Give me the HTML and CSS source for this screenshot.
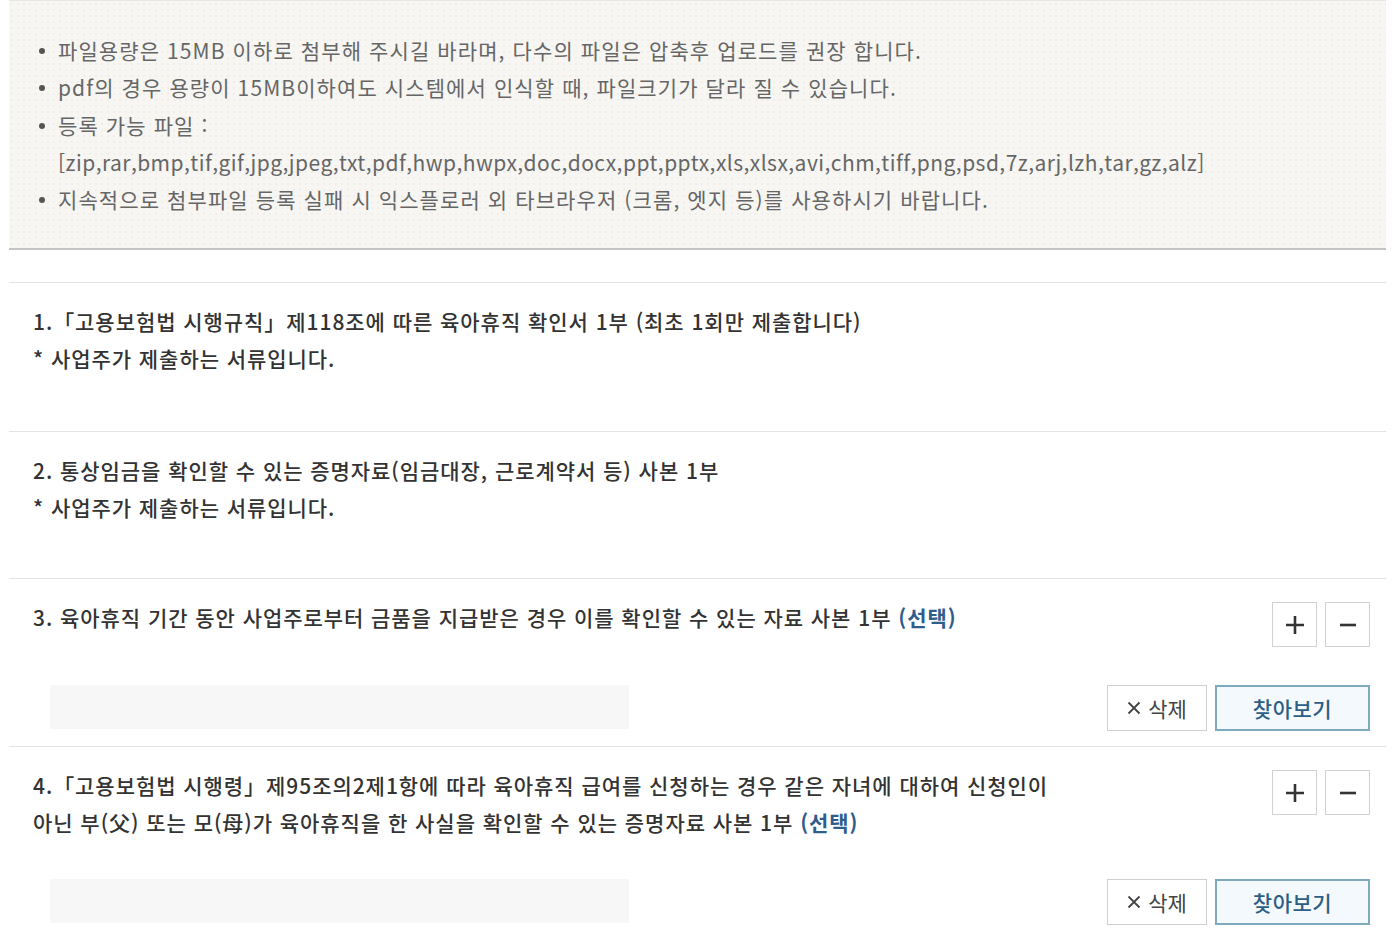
FILE: index.html
```html
<!DOCTYPE html>
<html lang="ko">
<head>
<meta charset="utf-8">
<title>첨부파일</title>
<link rel="stylesheet" href="styles.css">
</head>
<body>
<div class="page">
  <div class="notice">
    <ul class="notice-list">
      <li>파일용량은 15MB 이하로 첨부해 주시길 바라며, 다수의 파일은 압축후 업로드를 권장 합니다.</li>
      <li>pdf의 경우 용량이 15MB이하여도 시스템에서 인식할 때, 파일크기가 달라 질 수 있습니다.</li>
      <li>등록 가능 파일 :<br><span class="ext">[zip,rar,bmp,tif,gif,jpg,jpeg,txt,pdf,hwp,hwpx,doc,docx,ppt,pptx,xls,xlsx,avi,chm,tiff,png,psd,7z,arj,lzh,tar,gz,alz]</span></li>
      <li>지속적으로 첨부파일 등록 실패 시 익스플로러 외 타브라우저 (크롬, 엣지 등)를 사용하시기 바랍니다.</li>
    </ul>
  </div>

  <div class="docs">
    <div class="doc doc-plain doc-first">
      <p class="doc-title">1.「고용보험법 시행규칙」제118조에 따른 육아휴직 확인서 1부 (최초 1회만 제출합니다)<br>* 사업주가 제출하는 서류입니다.</p>
    </div>
    <div class="doc doc-plain">
      <p class="doc-title">2. 통상임금을 확인할 수 있는 증명자료(임금대장, 근로계약서 등) 사본 1부<br>* 사업주가 제출하는 서류입니다.</p>
    </div>
    <div class="doc">
      <div class="doc-head">
        <p class="doc-title">3. 육아휴직 기간 동안 사업주로부터 금품을 지급받은 경우 이를 확인할 수 있는 자료 사본 1부 <span class="opt">(선택)</span></p>
        <div class="pm">
          <button class="pm-btn" type="button" aria-label="추가"><svg width="20" height="20" viewBox="0 0 20 20"><path d="M10 1v18M1 10h18" stroke="#333" stroke-width="2.6" fill="none"/></svg></button>
          <button class="pm-btn" type="button" aria-label="삭제"><svg width="20" height="20" viewBox="0 0 20 20"><path d="M2 10h16" stroke="#333" stroke-width="2.6" fill="none"/></svg></button>
        </div>
      </div>
      <div class="file-row">
        <div class="file-input"></div>
        <div class="file-btns">
          <button class="btn-del" type="button"><svg class="x-icon" width="14" height="14" viewBox="0 0 14 14"><path d="M1.5 1.5l11 11M12.5 1.5l-11 11" stroke="#444" stroke-width="1.8" fill="none"/></svg>삭제</button>
          <button class="btn-find" type="button">찾아보기</button>
        </div>
      </div>
    </div>
    <div class="doc">
      <div class="doc-head">
        <p class="doc-title">4.「고용보험법 시행령」제95조의2제1항에 따라 육아휴직 급여를 신청하는 경우 같은 자녀에 대하여 신청인이<br>아닌 부(父) 또는 모(母)가 육아휴직을 한 사실을 확인할 수 있는 증명자료 사본 1부 <span class="opt">(선택)</span></p>
        <div class="pm">
          <button class="pm-btn" type="button" aria-label="추가"><svg width="20" height="20" viewBox="0 0 20 20"><path d="M10 1v18M1 10h18" stroke="#333" stroke-width="2.6" fill="none"/></svg></button>
          <button class="pm-btn" type="button" aria-label="삭제"><svg width="20" height="20" viewBox="0 0 20 20"><path d="M2 10h16" stroke="#333" stroke-width="2.6" fill="none"/></svg></button>
        </div>
      </div>
      <div class="file-row">
        <div class="file-input"></div>
        <div class="file-btns">
          <button class="btn-del" type="button"><svg class="x-icon" width="14" height="14" viewBox="0 0 14 14"><path d="M1.5 1.5l11 11M12.5 1.5l-11 11" stroke="#444" stroke-width="1.8" fill="none"/></svg>삭제</button>
          <button class="btn-find" type="button">찾아보기</button>
        </div>
      </div>
    </div>
  </div>
</div>
</body>
</html>
```

FILE: styles.css
```css
* { box-sizing: border-box; }
html, body { margin: 0; padding: 0; background: #fff; }
body {
  font-family: "Noto Sans CJK KR", "Noto Sans", sans-serif;
  color: #333;
}
.page {
  margin: 0 7px 0 9px;
}
.notice {
  background-color: #f7f6f3;
  background-image: radial-gradient(circle, #efeeea 1px, transparent 1.3px);
  background-size: 6px 6px;
  border-top: 1px solid #e6e6e6;
  border-bottom: 2px solid #c4c4c4;
  padding: 31px 20px 30px 33px;
}
.notice-list {
  margin: 0;
  padding: 0 0 0 16px;
  list-style: none;
}
.notice-list li {
  position: relative;
  font-size: 21px;
  line-height: 37.3px;
  color: #666;
  letter-spacing: 1.1px;
}
.notice-list .ext {
  letter-spacing: 0.45px;
}
.notice-list li::before {
  content: "";
  position: absolute;
  left: -19px;
  top: 16px;
  width: 6px;
  height: 6px;
  border-radius: 50%;
  background: #555;
}
.docs {
  margin-top: 32px;
}
.doc {
  border-top: 1px solid #e3e3e3;
  padding: 20px 16px 15px 24px;
}
.doc-plain {
  min-height: 147px;
}
.doc-first {
  min-height: 149px;
}
.doc-title {
  margin: 0;
  font-size: 21px;
  line-height: 37px;
  color: #333;
  font-weight: 500;
  letter-spacing: 0.95px;
}
.opt { color: #2f5d8c; font-weight: 700; }
.doc-head {
  display: flex;
  justify-content: space-between;
  align-items: flex-start;
}
.pm {
  display: flex;
  gap: 8px;
  margin-top: 3px;
}
.pm-btn {
  width: 45px;
  height: 45px;
  border: 1px solid #d2d2d2;
  background: #fff;
  padding: 0;
  display: flex;
  align-items: center;
  justify-content: center;
}
.file-row {
  display: flex;
  justify-content: space-between;
  align-items: flex-start;
  margin-top: 38px;
  padding-left: 17px;
}
.file-input {
  width: 579px;
  height: 44px;
  background: #f7f7f7;
}
.file-btns {
  display: flex;
  gap: 8px;
}
.btn-del {
  width: 100px;
  height: 46px;
  border: 1px solid #cfcfcf;
  background: #fff;
  font-family: "Noto Sans CJK KR", sans-serif;
  font-size: 21px;
  color: #444;
  padding: 0;
  display: flex;
  align-items: center;
  justify-content: center;
  gap: 7px;
}
.btn-find {
  width: 155px;
  height: 46px;
  border: 2px solid #7fa9bd;
  background: #f3f9fc;
  font-family: "Noto Sans CJK KR", sans-serif;
  font-size: 21px;
  font-weight: 500;
  color: #2d5f86;
  padding: 0;
  letter-spacing: 0.5px;
}
```
